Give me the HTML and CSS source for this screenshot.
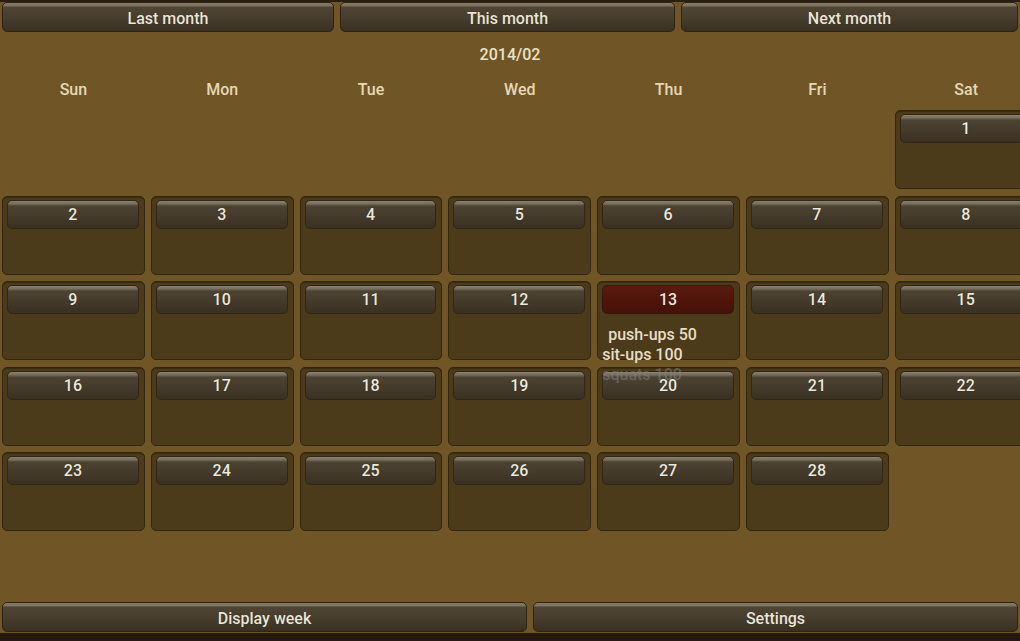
FILE: index.html
```html
<!DOCTYPE html>
<html>
<head>
<meta charset="utf-8">
<link rel="stylesheet" href="styles.css">
</head>
<body>
<div class="app">
  <div class="topbar">
    <div class="btn">Last month</div>
    <div class="btn">This month</div>
    <div class="btn">Next month</div>
  </div>
  <div class="title">2014/02</div>
  <div class="grid weekdays">
    <div>Sun</div><div>Mon</div><div>Tue</div><div>Wed</div><div>Thu</div><div>Fri</div><div>Sat</div>
  </div>
  <div class="grid cal">
    <div class="empty"></div><div class="empty"></div><div class="empty"></div><div class="empty"></div><div class="empty"></div><div class="empty"></div>
    <div class="cell"><div class="day">1</div></div>
    <div class="cell"><div class="day">2</div></div>
    <div class="cell"><div class="day">3</div></div>
    <div class="cell"><div class="day">4</div></div>
    <div class="cell"><div class="day">5</div></div>
    <div class="cell"><div class="day">6</div></div>
    <div class="cell"><div class="day">7</div></div>
    <div class="cell"><div class="day">8</div></div>
    <div class="cell"><div class="day">9</div></div>
    <div class="cell"><div class="day">10</div></div>
    <div class="cell"><div class="day">11</div></div>
    <div class="cell"><div class="day">12</div></div>
    <div class="cell today"><div class="day">13</div>
      <div class="notes"><div class="note n1">push-ups 50</div><div class="note">sit-ups 100</div><div class="note faded">squats 100</div></div>
    </div>
    <div class="cell"><div class="day">14</div></div>
    <div class="cell"><div class="day">15</div></div>
    <div class="cell"><div class="day">16</div></div>
    <div class="cell"><div class="day">17</div></div>
    <div class="cell"><div class="day">18</div></div>
    <div class="cell"><div class="day">19</div></div>
    <div class="cell"><div class="day">20</div></div>
    <div class="cell"><div class="day">21</div></div>
    <div class="cell"><div class="day">22</div></div>
    <div class="cell"><div class="day">23</div></div>
    <div class="cell"><div class="day">24</div></div>
    <div class="cell"><div class="day">25</div></div>
    <div class="cell"><div class="day">26</div></div>
    <div class="cell"><div class="day">27</div></div>
    <div class="cell"><div class="day">28</div></div>
  </div>
  <div class="bottombar">
    <div class="btn">Display week</div>
    <div class="btn">Settings</div>
  </div>
</div>
</body>
</html>
```
FILE: styles.css
```css
* { box-sizing: border-box; }
html, body {
  margin: 0;
  padding: 0;
  width: 1020px;
  height: 641px;
  overflow: hidden;
  background: #24190c;
}
.app {
  width: 1020px;
  height: 633px;
  background: #705527;
  border-top: 2px solid #2a1e10;
  font-family: Roboto, "Liberation Sans", sans-serif;
  font-weight: 500;
  font-size: 16px;
  color: #e9e2d0;
  overflow: hidden;
}
.topbar {
  display: grid;
  grid-template-columns: 332px 335px 1fr;
  gap: 6px;
  padding: 0 2px;
}
.btn {
  height: 30px;
  line-height: 31px;
  text-align: center;
  border-radius: 5px;
  background: linear-gradient(#847b69 0, #7a705d 3px, #4f4533 4px, #463c2c 60%, #3a3022 100%);
  border: 1px solid #2e2414;
  text-shadow: 0 0 1px rgba(0,0,0,0.6);
  color: #ece6d8;
}
.title {
  margin-top: 13px;
  height: 20px;
  line-height: 20px;
  text-align: center;
  color: #ece2c8;
}
.grid {
  display: grid;
  grid-template-columns: repeat(7, 142.8px);
  column-gap: 6px;
  padding-left: 2px;
}
.weekdays {
  margin-top: 15px;
  height: 20px;
  line-height: 20px;
  text-align: center;
  color: #e6d8b4;
}
.cal {
  margin-top: 10px;
  grid-template-rows: repeat(5, 79px);
  row-gap: 6.5px;
}
.cell {
  border-radius: 5px;
  background: #4c3b1a;
  border: 1px solid #33260f;
  box-shadow: inset 0 1px 0 rgba(0,0,0,0.25);
  padding: 3px 5px 0 4px;
}
.day {
  height: 29px;
  line-height: 28px;
  text-align: center;
  border-radius: 5px;
  background: linear-gradient(#8a8170 0, #756b59 3px, #4c4333 5px, #433a2b 60%, #393022 100%);
  border: 1px solid #2f2616;
  color: #eee9dc;
  text-shadow: 0 0 1px rgba(0,0,0,0.6);
}
.today .day {
  background: linear-gradient(#5a1c10, #4e1409 60%, #45120a);
  border-color: #3a150b;
}
.notes {
  position: relative;
  z-index: 1;
  margin-top: 11px;
  line-height: 20px;
  color: #e8dec6;
  white-space: nowrap;
}
.n1 { padding-left: 6px; }
.faded { color: rgba(130, 132, 128, 0.55); }
.bottombar {
  display: grid;
  grid-template-columns: 525px 1fr;
  gap: 6px;
  padding: 0 2px;
  margin-top: 71px;
}
```
